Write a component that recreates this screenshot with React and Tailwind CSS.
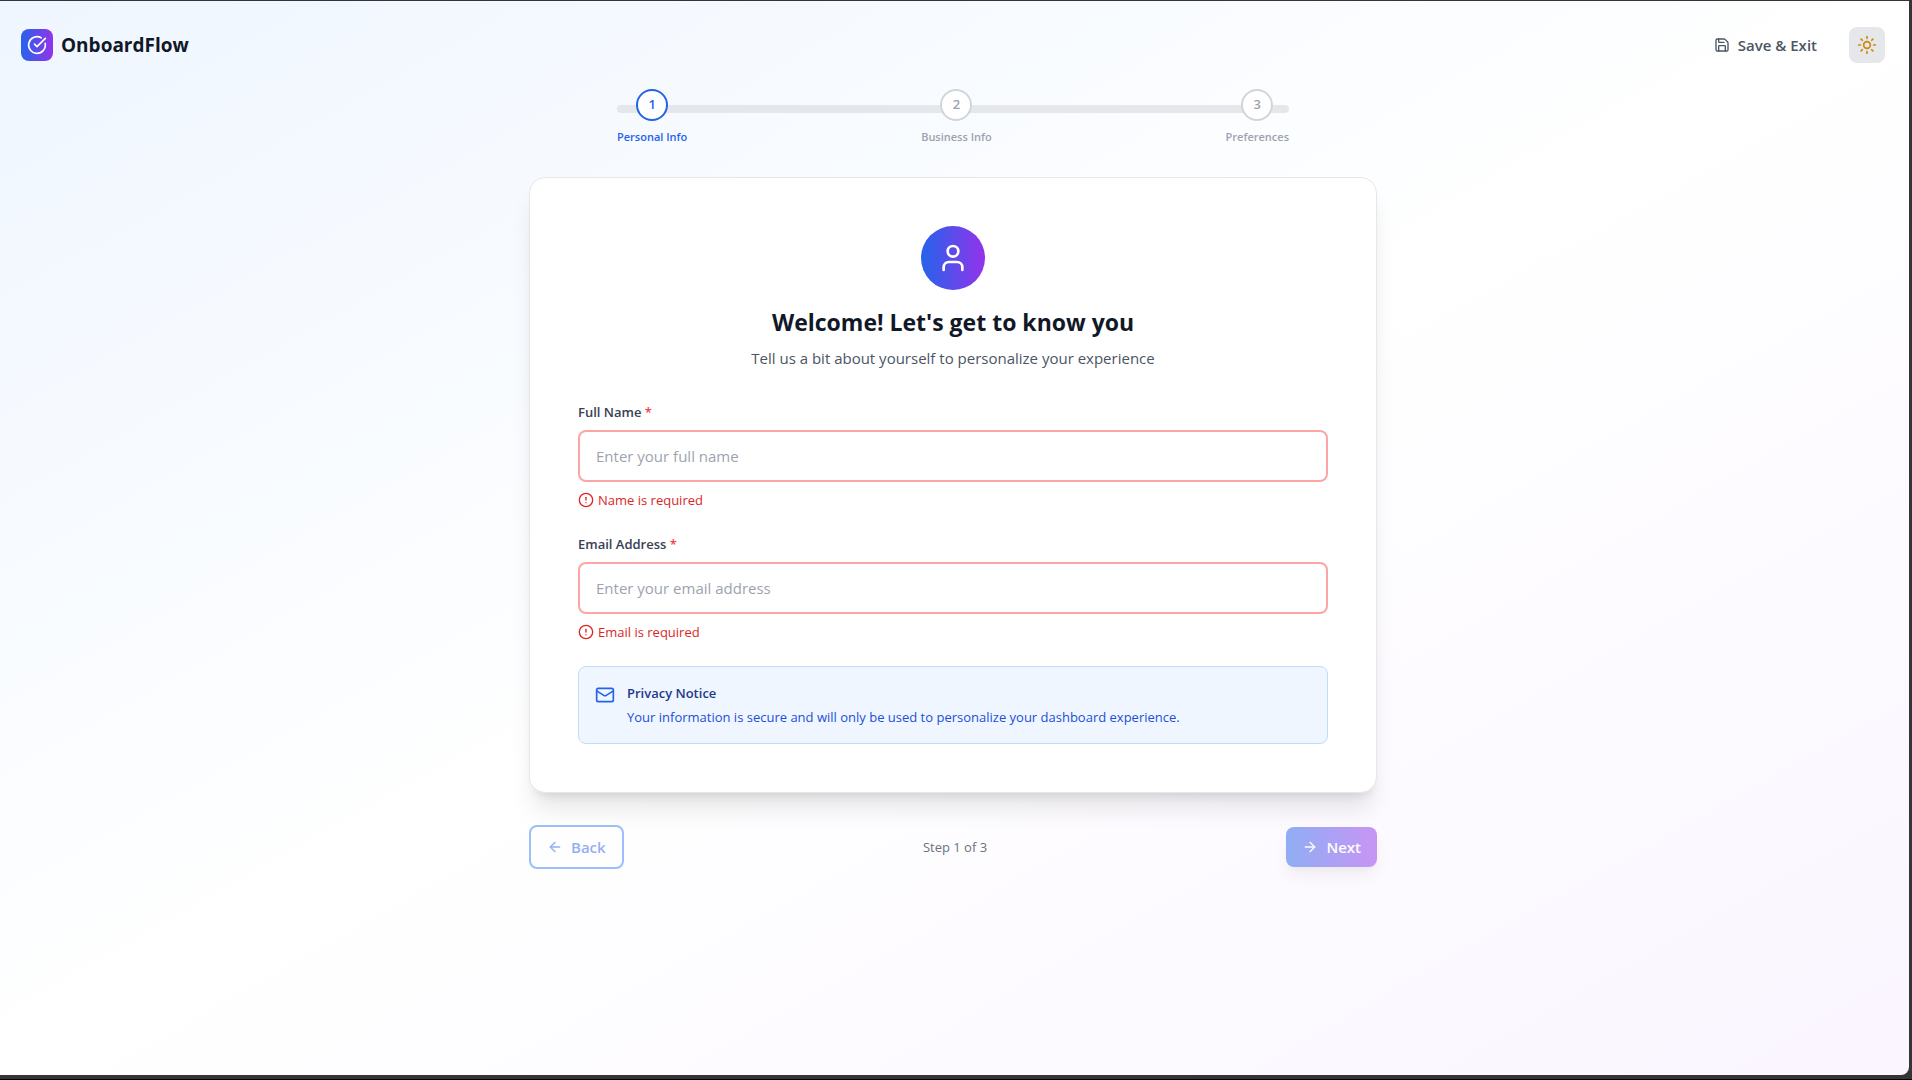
import React, { useState } from "react";
import {
  ArrowLeft,
  ArrowRight,
  CircleAlert,
  CircleCheckBig,
  Mail,
  Save,
  Sun,
  User,
} from "lucide-react";

const steps = ["Personal Info", "Business Info", "Preferences"];

function Header() {
  return (
    <header className="flex items-center justify-between pt-[26px] pr-6 pb-[26px] pl-[21px]">
      <div className="flex items-center gap-2">
        <div className="flex size-8 items-center justify-center rounded-lg bg-linear-to-r/srgb from-[#2563eb] to-[#9333ea]">
          <CircleCheckBig className="size-5 text-white" />
        </div>
        <span className="text-[19px] leading-8 font-bold text-[#111827]">OnboardFlow</span>
      </div>
      <div className="flex items-center gap-4">
        <button
          type="button"
          className="flex items-center gap-2 px-4 text-[15px] leading-6 font-semibold text-[#4b5563]"
        >
          <Save className="size-4" />
          Save &amp; Exit
        </button>
        <button
          type="button"
          aria-label="Toggle theme"
          className="rounded-lg bg-[#e5e7eb] p-2 text-[#ca8a04]"
        >
          <Sun className="size-5" />
        </button>
      </div>
    </header>
  );
}

function Stepper({ current }) {
  return (
    <div className="relative mx-auto mb-8 max-w-2xl">
      <div className="absolute inset-x-0 top-4 h-2 rounded-full bg-[#e5e7eb]" />
      <ol className="relative flex justify-between">
        {steps.map((label, i) => (
          <li key={label} className="flex flex-col items-center">
            <span
              className={
                i === current
                  ? "flex size-8 items-center justify-center rounded-full border-2 border-[#2563eb] bg-white text-[13px] font-semibold text-[#2563eb]"
                  : "flex size-8 items-center justify-center rounded-full border-2 border-[#d1d5db] bg-white text-[13px] font-semibold text-[#9ca3af]"
              }
            >
              {i + 1}
            </span>
            <span
              className={
                i === current
                  ? "mt-2 text-[11px] leading-4 font-semibold text-[#2563eb]"
                  : "mt-2 text-[11px] leading-4 font-semibold text-[#9ca3af]"
              }
            >
              {label}
            </span>
          </li>
        ))}
      </ol>
    </div>
  );
}

function Field({ id, type, label, placeholder, error }) {
  const [value, setValue] = useState("");
  return (
    <div>
      <label htmlFor={id} className="mb-2 block text-[13px] leading-5 font-semibold text-[#374151]">
        {label} <span className="text-[#ef4444]">*</span>
      </label>
      <input
        id={id}
        type={type}
        value={value}
        onChange={(e) => setValue(e.target.value)}
        placeholder={placeholder}
        aria-describedby={id + "-error"}
        className="block w-full rounded-lg border-2 border-[#fca5a5] bg-white px-4 py-3 text-[15px] leading-6 text-[#111827] outline-none placeholder:text-[#9ca3af]"
      />
      <p
        id={id + "-error"}
        className="mt-2 flex items-center gap-1 text-[13px] leading-5 text-[#dc2626]"
      >
        <CircleAlert className="size-4" />
        {error}
      </p>
    </div>
  );
}

export default function App() {
  return (
    <div className="flex min-h-screen flex-col border-b border-black bg-[#353436] pt-px pr-[3px] pb-1 font-['Open_Sans','Noto_Sans',sans-serif]">
      <div className="flex-1 rounded-br-lg bg-linear-to-br/srgb from-[#eff6ff] via-white to-[#faf5ff]">
        <Header />
        <main className="mx-auto max-w-[899px] pr-[27px] pl-6">
          <Stepper current={0} />
          <form onSubmit={(e) => e.preventDefault()}>
            <section className="rounded-2xl border border-[#e5e7eb] bg-white p-12 shadow-[0_20px_25px_-5px_rgba(0,0,0,0.1),0_8px_10px_-6px_rgba(0,0,0,0.1)]">
              <div className="mb-8 flex flex-col items-center text-center">
                <div className="mb-4 flex size-16 items-center justify-center rounded-full bg-linear-to-r/srgb from-[#2563eb] to-[#9333ea]">
                  <User className="size-8 text-white" />
                </div>
                <h1 className="mb-2 text-[23px] leading-8 font-bold text-[#111827]">
                  Welcome! Let's get to know you
                </h1>
                <p className="text-[15px] leading-6 text-[#4b5563]">
                  Tell us a bit about yourself to personalize your experience
                </p>
              </div>
              <div className="space-y-6">
                <Field
                  id="name"
                  type="text"
                  label="Full Name"
                  placeholder="Enter your full name"
                  error="Name is required"
                />
                <Field
                  id="email"
                  type="email"
                  label="Email Address"
                  placeholder="Enter your email address"
                  error="Email is required"
                />
                <div className="flex items-start gap-3 rounded-lg border border-[#bfdbfe] bg-[#eff6ff] p-4">
                  <Mail className="mt-0.5 size-5 text-[#2563eb]" />
                  <div className="text-[13px] leading-5">
                    <h2 className="mb-1 font-semibold text-[#1e3a8a]">Privacy Notice</h2>
                    <p className="text-[#1d4ed8]">
                      Your information is secure and will only be used to personalize your
                      dashboard experience.
                    </p>
                  </div>
                </div>
              </div>
            </section>
            <div className="mt-8 flex items-center justify-between">
              <button
                type="button"
                disabled
                className="flex items-center gap-2 rounded-lg border-2 border-[#3b82f6] bg-white px-4 py-2 text-[15px] leading-6 font-semibold text-[#2563eb] opacity-50"
              >
                <ArrowLeft className="size-4" />
                Back
              </button>
              <span className="text-[13px] leading-5 text-[#6b7280]">Step 1 of 3</span>
              <button
                type="submit"
                disabled
                className="flex items-center gap-2 rounded-lg bg-linear-to-r/srgb from-[#2563eb] to-[#9333ea] px-4 py-2 text-[15px] leading-6 font-semibold text-white opacity-50 shadow-[0_10px_15px_-3px_rgba(0,0,0,0.1),0_4px_6px_-4px_rgba(0,0,0,0.1)]"
              >
                <ArrowRight className="size-4" />
                Next
              </button>
            </div>
          </form>
        </main>
      </div>
    </div>
  );
}
